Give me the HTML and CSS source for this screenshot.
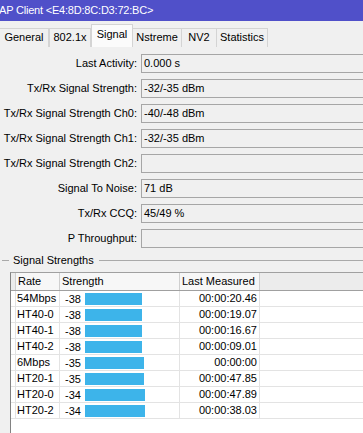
FILE: index.html
```html
<!DOCTYPE html>
<html lang="en">
<head>
    <meta charset="UTF-8">
    <meta name="viewport" content="width=device-width, initial-scale=1.0">
    <title>AP Client</title>
    <link rel="stylesheet" href="styles.css">
</head>
<body>
    <div class="titlebar">AP Client &lt;E4:8D:8C:D3:72:BC&gt;</div>

    <div class="tabs">
        <div class="tab tab-general">General</div>
        <div class="tab tab-8021x">802.1x</div>
        <div class="tab tab-signal active">Signal</div>
        <div class="tab tab-nstreme">Nstreme</div>
        <div class="tab tab-nv2">NV2</div>
        <div class="tab tab-stats">Statistics</div>
    </div>

    <div class="form">
        <div class="row"><label>Last Activity:</label><div class="field">0.000 s</div></div>
        <div class="row"><label>Tx/Rx Signal Strength:</label><div class="field">-32/-35 dBm</div></div>
        <div class="row"><label>Tx/Rx Signal Strength Ch0:</label><div class="field">-40/-48 dBm</div></div>
        <div class="row"><label>Tx/Rx Signal Strength Ch1:</label><div class="field">-32/-35 dBm</div></div>
        <div class="row"><label>Tx/Rx Signal Strength Ch2:</label><div class="field"></div></div>
        <div class="row"><label>Signal To Noise:</label><div class="field">71 dB</div></div>
        <div class="row"><label>Tx/Rx CCQ:</label><div class="field">45/49 %</div></div>
        <div class="row"><label>P Throughput:</label><div class="field"></div></div>
    </div>

    <div class="group-title"><span>Signal Strengths</span></div>

    <div class="list">
        <div class="list-head">
            <div class="cell"></div>
            <div class="cell">Rate</div>
            <div class="cell">Strength</div>
            <div class="cell">Last Measured</div>
            <div class="cell filler"></div>
        </div>
        <div class="list-row">
            <div class="cell"></div><div class="cell">54Mbps</div>
            <div class="cell strength"><span class="val">-38</span><span class="bar" style="width:57px"></span></div>
            <div class="cell time">00:00:20.46</div><div class="cell filler"></div>
        </div>
        <div class="list-row">
            <div class="cell"></div><div class="cell">HT40-0</div>
            <div class="cell strength"><span class="val">-38</span><span class="bar" style="width:57px"></span></div>
            <div class="cell time">00:00:19.07</div><div class="cell filler"></div>
        </div>
        <div class="list-row">
            <div class="cell"></div><div class="cell">HT40-1</div>
            <div class="cell strength"><span class="val">-38</span><span class="bar" style="width:57px"></span></div>
            <div class="cell time">00:00:16.67</div><div class="cell filler"></div>
        </div>
        <div class="list-row">
            <div class="cell"></div><div class="cell">HT40-2</div>
            <div class="cell strength"><span class="val">-38</span><span class="bar" style="width:57px"></span></div>
            <div class="cell time">00:00:09.01</div><div class="cell filler"></div>
        </div>
        <div class="list-row">
            <div class="cell"></div><div class="cell">6Mbps</div>
            <div class="cell strength"><span class="val">-35</span><span class="bar" style="width:59px"></span></div>
            <div class="cell time">00:00:00</div><div class="cell filler"></div>
        </div>
        <div class="list-row">
            <div class="cell"></div><div class="cell">HT20-1</div>
            <div class="cell strength"><span class="val">-35</span><span class="bar" style="width:59px"></span></div>
            <div class="cell time">00:00:47.85</div><div class="cell filler"></div>
        </div>
        <div class="list-row">
            <div class="cell"></div><div class="cell">HT20-0</div>
            <div class="cell strength"><span class="val">-34</span><span class="bar" style="width:60px"></span></div>
            <div class="cell time">00:00:47.89</div><div class="cell filler"></div>
        </div>
        <div class="list-row">
            <div class="cell"></div><div class="cell">HT20-2</div>
            <div class="cell strength"><span class="val">-34</span><span class="bar" style="width:60px"></span></div>
            <div class="cell time">00:00:38.03</div><div class="cell filler"></div>
        </div>
    </div>
</body>
</html>
```

FILE: styles.css
```css
html, body { margin: 0; padding: 0; }
body { background: #f0f0f0; font-family: "Liberation Sans", Arial, sans-serif; font-size: 11px; color: #000; overflow: hidden; height: 433px; }

.titlebar { height: 21px; line-height: 21px; background: #5050c9; color: #fff; font-size: 11px; letter-spacing: -0.2px; white-space: nowrap; text-indent: -1px; }

.tabs { display: flex; align-items: flex-end; height: 26px; }
.tab { box-sizing: border-box; height: 19px; line-height: 17px; text-align: center; border: 1px solid #d4d4d4; border-bottom: none; border-left: none; background: #f0f0f0; }
.tab-general { width: 49px; }
.tab-8021x { width: 42px; border-left: 1px solid #d4d4d4; }
.tab-signal { width: 42px; }
.tab-nstreme { width: 49px; }
.tab-nv2 { width: 35px; }
.tab-stats { width: 51px; }
.tab.active { height: 23px; line-height: 19px; background: #fbfbfb; border-left: 1px solid #d4d4d4; }

.form { padding-top: 7px; }
.row { display: grid; grid-template-columns: 137px 1fr; column-gap: 4px; height: 19px; margin-bottom: 6px; }
.row label { text-align: right; line-height: 19px; white-space: nowrap; }
.field { box-sizing: border-box; height: 19px; line-height: 17px; padding-left: 2px; margin-right: -10px; border: 1px solid #a6a6a6; background: #f0f0f0; white-space: nowrap; }

.group-title { display: flex; align-items: center; height: 13px; }
.group-title::before { content: ""; width: 7px; margin-left: 2px; border-top: 1px solid #a9a9a9; }
.group-title span { padding: 0 5px 0 4px; line-height: 13px; }
.group-title::after { content: ""; flex: 1; border-top: 1px solid #a9a9a9; }

.list { margin: 5px 0 0 10px; height: 170px; background: #fff; border-left: 1px solid #828282; border-top: 1px solid #a0a0a0; }
.list-head, .list-row { display: grid; grid-template-columns: 4px 44px 120px 80px 1fr; }
.cell { box-sizing: border-box; border-left: 1px solid #e3e3e3; white-space: nowrap; overflow: hidden; }
.cell:first-child { border-left: none; }

.list-head { height: 17px; border-bottom: 1px solid #a0a0a0; }
.list-head .cell { background: #f7f7f7; border-left-color: #cfcfcf; line-height: 16px; padding-left: 2px; }
.list-head .cell:first-child { background: #ececec; padding: 0; }
.list-head .filler { background: #ececec; }

.list-row { height: 15px; border-bottom: 1px solid #e3e3e3; }
.list-row .cell { line-height: 14px; padding-left: 1px; }
.list-row .cell:first-child { padding: 0; }
.strength { display: flex; align-items: center; }
.list-row .strength { padding-left: 5px; }
.val { width: 20px; }
.bar { height: 12px; background: #3db4ea; }
.list-row .time { text-align: right; padding-right: 2px; }
```
